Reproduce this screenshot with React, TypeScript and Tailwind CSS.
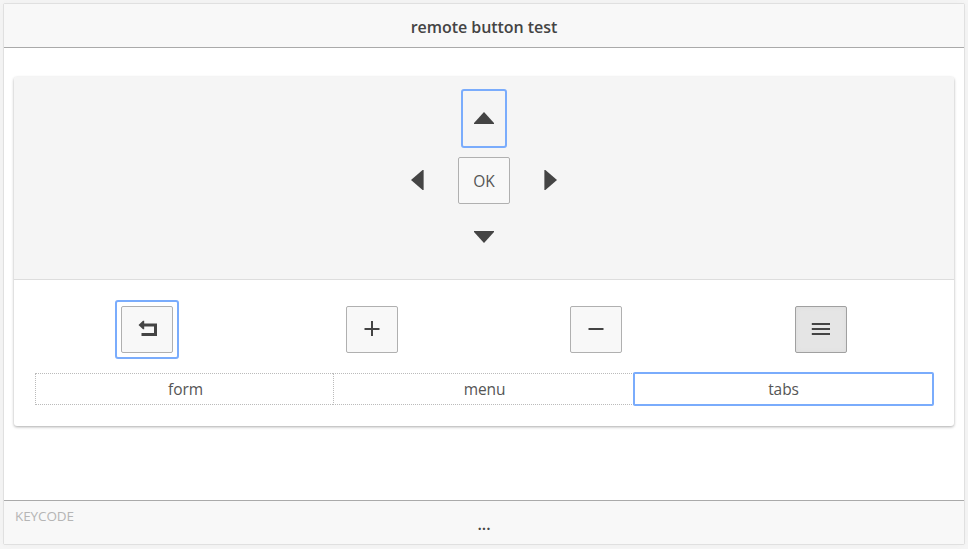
import type { ReactNode } from 'react';

function KeyButton({ children, focused = false, pressed = false }: { children: ReactNode; focused?: boolean; pressed?: boolean }) {
  return (
    <div className="flex justify-center">
      <div className={`h-[59px] w-16 rounded-[3px] border-2 p-1 ${focused ? 'border-[#7aacfc]' : 'border-transparent'}`}>
        <button
          className={`flex h-[47px] w-[52px] items-center justify-center rounded-[2px] border pb-px ${
            pressed ? 'border-[#a0a0a0] bg-[#e5e5e5] shadow-[inset_0_0_4px_#dbdbdb]' : 'border-[#b0b0b0] bg-[#f8f8f8]'
          }`}
        >
          {children}
        </button>
      </div>
    </div>
  );
}

function Icon({ d }: { d: string }) {
  return (
    <svg width="24" height="24" viewBox="0 0 24 24" fill="#444" className="shrink-0">
      <path d={d} />
    </svg>
  );
}

export default function App() {
  return (
    <div className="h-[549px] w-[968px] overflow-hidden bg-[#f6f6f6] p-[3px] font-['Open_Sans','Noto_Sans',sans-serif] text-[#555]">
      <div className="flex h-[542px] w-[962px] flex-col rounded-[2px] border border-[#e0e0e0] bg-white shadow-[0_0_8px_#eeeeee]">
        <header className="flex h-11 shrink-0 items-center justify-center border-b border-[#aaa] bg-[#f8f8f8] pt-[3px]">
          <h1 className="text-[16px] font-semibold tracking-[-0.04px] text-[#444]">remote button test</h1>
        </header>
        <main className="flex-1 px-[10px] pt-[29px]">
          <section className="h-[349px] overflow-hidden rounded-[3px] bg-white shadow-[0_1px_3px_#00000055]">
            <div className="flex h-[203px] flex-col items-center border-b border-[#ddd] bg-[#f5f5f5] pt-3">
              <button className="flex h-[59px] w-[46px] items-center justify-center rounded-[3px] border-2 border-[#7aacfc] pb-px">
                <svg width="20" height="12" viewBox="0 0 20 12" fill="#444"><path d="M0 12V11L10 0L20 11V12Z" /></svg>
              </button>
              <div className="mt-[9px] flex h-[47px] items-center">
                <svg className="mb-px" width="13" height="20" viewBox="0 0 13 20" fill="#444"><path d="M12.6 0H11.6L0 10L11.6 20H12.6Z" /></svg>
                <button className="mx-[34px] h-[47px] w-[52px] rounded-[2px] border border-[#b0b0b0] bg-[#f8f8f8] pt-[3px] text-[15.5px]">OK</button>
                <svg className="mb-px" width="13" height="20" viewBox="0 0 13 20" fill="#444"><path d="M0.4 0H1.4L13 10L1.4 20H0.4Z" /></svg>
              </div>
              <svg className="mt-[27px]" width="20" height="12" viewBox="0 0 20 12" fill="#444"><path d="M0 0H20V1L10 12L0 1Z" /></svg>
            </div>
            <div className="px-[21px] pt-5">
              <div className="grid grid-cols-4">
                <KeyButton focused><Icon d="M3.5 8L8 3.8H9.2V6.5H22V19H6.5V16H19V9.5H9.2V12.2H8Z" /></KeyButton>
                <KeyButton><Icon d="M11 4H13V11H19.5V13H13V19H11V13H4.5V11H11Z" /></KeyButton>
                <KeyButton><Icon d="M4.5 11H19.5V13H4.5Z" /></KeyButton>
                <KeyButton pressed><Icon d="M2.8 6H21V8H2.8ZM2.8 11H21V13H2.8ZM2.8 16H21V18H2.8Z" /></KeyButton>
              </div>
              <div className="mt-[14px] flex h-8 text-[15.5px] tracking-[-0.1px]">
                <button className="w-[298px] border border-r-0 border-dotted border-[#bbb] pl-[2px] pt-[2px]">form</button>
                <button className="w-[301px] border border-dotted border-[#bbb] pl-[2px] pt-[2px]">menu</button>
                <button className="w-[299px] rounded-[1px] border border-dotted border-[#4b85e5] pt-[2px] outline-2 -outline-offset-1 outline-[#7aacfc]">tabs</button>
              </div>
            </div>
          </section>
        </main>
        <footer className="relative h-11 shrink-0 border-t border-[#aaa] bg-[#f8f8f8]">
          <span className="absolute left-[11px] top-[5px] text-[13.5px] leading-5 tracking-[-0.1px] text-[#b5b5b5]">KEYCODE</span>
          <div className="pt-[11px] text-center text-[16px] font-semibold leading-6 text-[#444]">...</div>
        </footer>
      </div>
    </div>
  );
}
